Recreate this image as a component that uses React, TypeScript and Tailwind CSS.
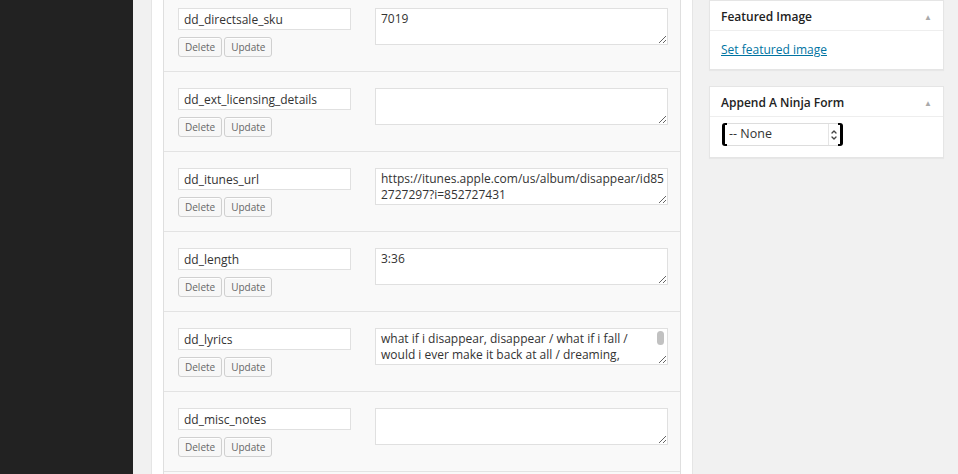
import { ChevronDown, ChevronUp } from 'lucide-react';

type Meta = {
  key: string;
  value: string;
  scroll?: boolean;
};

const fields: Meta[] = [
  { key: 'dd_directsale_sku', value: '7019' },
  { key: 'dd_ext_licensing_details', value: '' },
  {
    key: 'dd_itunes_url',
    value: 'https://itunes.apple.com/us/album/disappear/id852727297?i=852727431',
  },
  { key: 'dd_length', value: '3:36' },
  {
    key: 'dd_lyrics',
    value:
      'what if i disappear, disappear / what if i fall / would i ever make it back at all / dreaming, dreaming of a place so far away',
    scroll: true,
  },
  { key: 'dd_misc_notes', value: '' },
];

function FieldRow({ field }: { field: Meta }) {
  return (
    <div className="flex h-20 shrink-0 border-t border-[#e3e3e3] pt-4 pl-[14px]">
      <div className="w-[173px]">
        <input
          readOnly
          value={field.key}
          className="block h-[22px] w-full border border-[#e0e0e0] bg-white px-[5px] text-[12px] text-[#333] outline-none"
        />
        <div className="mt-[7px] flex gap-[2px]">
          <button className="h-5 rounded-[3px] border border-[#d0d0d0] bg-[#f7f7f7] px-[6px] text-[10px] text-[#666] shadow-[0_1px_0_#fff_inset]">
            Delete
          </button>
          <button className="h-5 rounded-[3px] border border-[#d0d0d0] bg-[#f7f7f7] px-[6px] text-[10px] text-[#666] shadow-[0_1px_0_#fff_inset]">
            Update
          </button>
        </div>
      </div>
      <div className="relative ml-[24px] w-[293px]">
        <textarea
          readOnly
          value={field.value}
          className={`block h-[37px] w-full overflow-hidden border border-[#e0e0e0] bg-white pt-[2px] pl-[5px] text-[12px] leading-[16px] text-[#333] outline-none ${
            field.scroll ? 'pr-[14px]' : 'pr-0'
          }`}
        />
        {field.scroll && (
          <span className="absolute top-[3px] right-[4px] h-[14px] w-[7px] rounded-full bg-[#c1c1c1]" />
        )}
      </div>
    </div>
  );
}

function SideBox({ title, children }: { title: string; children: React.ReactNode }) {
  return (
    <div className="border border-[#e5e5e5] bg-white shadow-[0_1px_1px_rgba(0,0,0,0.04)]">
      <div className="flex h-[30px] items-center justify-between border-b border-[#eee] px-[11px] pt-[2px]">
        <h3 className="text-[12px] font-semibold text-[#222]">{title}</h3>
        <span className="text-[8px] text-[#aaa]">▲</span>
      </div>
      {children}
    </div>
  );
}

export default function App() {
  return (
    <div
      className="flex h-[474px] w-[958px] overflow-hidden bg-[#f1f1f1]"
      style={{ fontFamily: '"Open Sans", "Liberation Sans", sans-serif' }}
    >
      <aside className="w-[133px] shrink-0 bg-[#222]" />

      <main className="ml-[18px] flex w-[542px] shrink-0 flex-col border-x border-[#e5e5e5] bg-white px-[11px]">
        <div className="-mt-[9px] flex flex-col border-x border-[#dfdfdf] bg-[#f9f9f9]">
          {fields.map((f) => (
            <FieldRow key={f.key} field={f} />
          ))}
          <div className="h-20 border-t border-[#e3e3e3]" />
        </div>
      </main>

      <div className="ml-[16px] flex w-[235px] shrink-0 flex-col gap-[16px]">
        <SideBox title="Featured Image">
          <div className="flex h-[38px] items-center px-[11px]">
            <a href="#" className="text-[12px] text-[#0074a2] underline">
              Set featured image
            </a>
          </div>
        </SideBox>

        <SideBox title="Append A Ninja Form">
          <div className="flex h-[40px] items-start px-[12px] pt-[6px]">
            <div className="flex h-[23px] items-stretch">
              <span className="w-[5px] rounded-l-[3px] border-y-2 border-l-[3px] border-black" />
              <div className="flex w-[111px] items-center border-y border-[#ddd] bg-white">
                <span className="flex-1 pl-[2px] text-[12.5px] text-[#333]">-- None</span>
                <span className="flex h-full w-[10px] flex-col items-center justify-center border-l border-[#e5e5e5] text-[#444]">
                  <ChevronUp size={8} strokeWidth={4} className="-mb-[2px]" />
                  <ChevronDown size={8} strokeWidth={4} />
                </span>
              </div>
              <span className="w-[5px] rounded-r-[3px] border-y-2 border-r-[3px] border-black" />
            </div>
          </div>
        </SideBox>
      </div>
    </div>
  );
}
